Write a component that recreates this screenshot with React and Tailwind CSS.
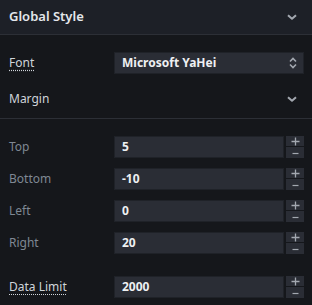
import React from "react";

const Chevron = () => (
  <svg width="10" height="6" viewBox="0 0 10 6" className="text-[#a3a8b0]">
    <path d="M1 1.2 L5 4.8 L9 1.2" fill="none" stroke="currentColor" strokeWidth="2" strokeLinejoin="round" />
  </svg>
);

const UpDown = () => (
  <svg width="8" height="12" viewBox="0 0 8 12" className="text-[#a3a8b0]">
    <path d="M1 4.5 L4 1.5 L7 4.5" fill="none" stroke="currentColor" strokeWidth="1.6" />
    <path d="M1 7.5 L4 10.5 L7 7.5" fill="none" stroke="currentColor" strokeWidth="1.6" />
  </svg>
);

const Plus = () => (
  <svg width="9" height="9" viewBox="0 0 9 9" className="text-[#a3a8b0]">
    <path d="M0.5 4.5 H8.5 M4.5 0.5 V8.5" stroke="currentColor" strokeWidth="1.3" />
  </svg>
);

const Minus = () => (
  <svg width="7" height="3" viewBox="0 0 7 3" className="text-[#a3a8b0]">
    <path d="M0.5 1.5 H6.5" stroke="currentColor" strokeWidth="1.2" />
  </svg>
);

const NumRow = ({ label, value, strong, className = "" }) => (
  <div className={`flex items-center h-[22px] pl-[9px] pr-[8px] ${className}`}>
    <div
      className={`w-[105px] text-[12px] ${
        strong
          ? "text-[#cfd4da] underline decoration-dotted underline-offset-[3px]"
          : "text-[#7f8893]"
      }`}
    >
      {label}
    </div>
    <div className="flex-1 flex gap-[2px] h-[22px]">
      <div className="flex-1 bg-[#2a2d35] border border-[#1f2228] flex items-center pl-[7px] text-[12px] font-bold text-[#eef0f2]">
        {value}
      </div>
      <div className="w-[18px] flex flex-col gap-[1px]">
        <div className="flex-1 bg-[#2a2d35] flex items-center justify-center">
          <Plus />
        </div>
        <div className="flex-1 bg-[#2a2d35] flex items-center justify-center pt-[1px]">
          <Minus />
        </div>
      </div>
    </div>
  </div>
);

export default function App() {
  return (
    <div
      className="w-[312px] h-[305px] bg-[#15171b] overflow-hidden"
      style={{ fontFamily: '"Noto Sans", "Open Sans", sans-serif' }}
    >
      <div className="h-[35px] bg-[#1d2027] border-b border-[#2c2f36] flex items-center justify-between pl-[9px] pr-[15px]">
        <span className="text-[13px] font-semibold text-[#e4e7eb]">Global Style</span>
        <Chevron />
      </div>
      <div className="flex items-center h-[22px] pl-[9px] pr-[8px] mt-[17px]">
        <div className="w-[105px] text-[12px] text-[#cfd4da] underline decoration-dotted underline-offset-[3px]">Font</div>
        <div className="flex-1 h-[22px] bg-[#2a2d35] border border-[#1f2228] flex items-center justify-between pl-[7px] pr-[6px]">
          <span className="text-[12px] font-bold text-[#eef0f2]">Microsoft YaHei</span>
          <UpDown />
        </div>
      </div>
      <div className="mt-[6px] h-[39px] border-b border-[#2c2f36] flex items-center justify-between pl-[9px] pr-[15px]">
        <span className="text-[12px] text-[#cfd4da]">Margin</span>
        <Chevron />
      </div>
      <div className="mt-[17px] flex flex-col gap-[10px]">
        <NumRow label="Top" value="5" />
        <NumRow label="Bottom" value="-10" />
        <NumRow label="Left" value="0" />
        <NumRow label="Right" value="20" />
      </div>
      <NumRow label="Data Limit" value="2000" strong className="mt-[22px]" />
    </div>
  );
}
